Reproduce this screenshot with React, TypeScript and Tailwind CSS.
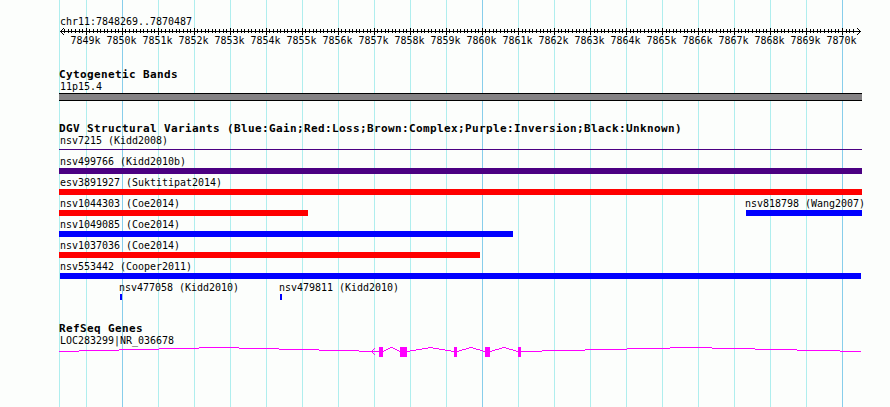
type Feature = {
  name: string;
  start: number;
  end: number;
  labelX: number;
  color: string;
};

const LEFT = 59;

const rows: Feature[][] = [
  [{ name: "nsv499766 (Kidd2010b)", start: 59, end: 862, labelX: 60, color: "bg-[#4b0082]" }],
  [{ name: "esv3891927 (Suktitipat2014)", start: 59, end: 862, labelX: 60, color: "bg-[#ff0000]" }],
  [
    { name: "nsv1044303 (Coe2014)", start: 59, end: 308, labelX: 60, color: "bg-[#ff0000]" },
    { name: "nsv818798 (Wang2007)", start: 746, end: 862, labelX: 745, color: "bg-[#0000ff]" },
  ],
  [{ name: "nsv1049085 (Coe2014)", start: 59, end: 513, labelX: 60, color: "bg-[#0000ff]" }],
  [{ name: "nsv1037036 (Coe2014)", start: 59, end: 480, labelX: 60, color: "bg-[#ff0000]" }],
  [{ name: "nsv553442 (Cooper2011)", start: 60, end: 861, labelX: 60, color: "bg-[#0000ff]" }],
  [
    { name: "nsv477058 (Kidd2010)", start: 120, end: 122, labelX: 119, color: "bg-[#0000ff]" },
    { name: "nsv479811 (Kidd2010)", start: 280, end: 282, labelX: 279, color: "bg-[#0000ff]" },
  ],
];

const exons = [
  [379, 383],
  [400, 407],
  [454, 457],
  [485, 490],
  [518, 521],
];

const introns = [
  [59, 379],
  [383, 400],
  [407, 454],
  [457, 485],
  [490, 518],
  [521, 861],
];

const kilobases = Array.from({ length: 22 }, (_, i) => 7849 + i);
const minorTicks = Array.from({ length: 220 }, (_, i) => Math.floor(86.32 + (i - 6) * 3.6007));

// An intron climbs 4px to its middle and comes back down, one pixel per step.
function intronSteps(start: number, end: number) {
  const edges = [0, 1, 3, 5, 7, 9, 11, 13, 15, 16].map((n) =>
    Math.round(start + ((end - start) * n) / 16)
  );
  const heights = [0, 1, 2, 3, 4, 3, 2, 1, 0];
  return heights.map((h, i) => ({ x: edges[i], y: 351 - h, width: edges[i + 1] - edges[i] }));
}

export default function App() {
  return (
    <div className="relative h-[407px] w-[890px] overflow-hidden bg-[#fcfefc] font-['DejaVu_Sans_Mono',monospace] text-[11px] leading-[14px] text-black">
      <GridLines />
      <div className="relative pl-[59px] pt-[15px]">
        <Label className="ml-px">chr11:7848269..7870487</Label>
        <Ruler />
        <div className="ml-[9px] flex">
          {kilobases.map((kb) => (
            <div key={kb} className="flex h-3 w-9 shrink-0 justify-center">
              <span className="block origin-center scale-x-[.906]">{kb}k</span>
            </div>
          ))}
        </div>

        <Heading className="mt-[22px]">Cytogenetic Bands</Heading>
        <Label className="ml-px">11p15.4</Label>
        <div className="mt-px h-2 w-[803px] border-y border-black bg-[#848284]" />

        <Heading className="mt-[21px]">
          DGV Structural Variants (Blue:Gain;Red:Loss;Brown:Complex;Purple:Inversion;Black:Unknown)
        </Heading>
        <div className="h-[21px]">
          <Label className="ml-px">nsv7215 (Kidd2008)</Label>
          <div className="mt-[3px] h-px w-[803px] bg-[#4b0082]" />
        </div>
        {rows.map((features) => (
          <FeatureRow key={features[0].name} features={features} />
        ))}

        <Heading className="mt-5">RefSeq Genes</Heading>
        <Label className="ml-px">LOC283299|NR_036678</Label>
        <GeneModel />
      </div>
    </div>
  );
}

function Heading({ children, className }: { children: string; className: string }) {
  return (
    <div className={`h-3 whitespace-nowrap font-bold tracking-[0.378px] ${className}`}>
      {children}
    </div>
  );
}

function Label({ children, className = "" }: { children: string; className?: string }) {
  return (
    <div className={`h-3 whitespace-nowrap ${className}`}>
      <span className="block w-max origin-left scale-x-[.906]">{children}</span>
    </div>
  );
}

function FeatureRow({ features }: { features: Feature[] }) {
  return (
    <div className="flex h-[21px]">
      {features.map((f, i) => {
        const previousEnd = i === 0 ? LEFT : features[i - 1].end;
        return (
          <div
            key={f.name}
            className="shrink-0"
            style={{ width: f.end - f.start, marginLeft: f.start - previousEnd }}
          >
            <div style={{ marginLeft: f.labelX - f.start }}>
              <Label>{f.name}</Label>
            </div>
            <div className={`mt-px h-1.5 ${f.color}`} />
          </div>
        );
      })}
    </div>
  );
}

function GridLines() {
  return (
    <svg className="absolute inset-0" width="890" height="407" shapeRendering="crispEdges">
      <rect x="59" y="0" width="1" height="407" fill="#afeeee" />
      {kilobases.map((kb, i) => (
        <rect
          key={kb}
          x={86 + i * 36}
          y="0"
          width="1"
          height="407"
          fill={kb % 10 === 0 ? "#87ceeb" : "#afeeee"}
        />
      ))}
    </svg>
  );
}

function Ruler() {
  return (
    <svg
      className="mt-px block h-1.5 w-[803px] overflow-visible"
      viewBox="59 28 803 6"
      shapeRendering="crispEdges"
    >
      <rect x="60" y="31" width="801" height="1" />
      {minorTicks.map((x) => (
        <rect key={x} x={x} y="29" width="1" height="4" />
      ))}
      {kilobases.map((kb, i) => (
        <rect key={kb} x={86 + i * 36} y="28" width="1" height="7" />
      ))}
      <path d="M60 31h1v1h-1zM61 30h1v1h-1zM62 29h1v1h-1zM63 28h1v1h-1zM61 32h1v1h-1zM62 33h1v1h-1zM63 34h1v1h-1z" />
      <path d="M860 31h1v1h-1zM859 30h1v1h-1zM858 29h1v1h-1zM857 28h1v1h-1zM859 32h1v1h-1zM858 33h1v1h-1zM857 34h1v1h-1z" />
    </svg>
  );
}

function GeneModel() {
  return (
    <svg
      className="mt-px block h-2.5 w-[803px] overflow-visible"
      viewBox="59 347 803 10"
      fill="#ff00ff"
      shapeRendering="crispEdges"
    >
      {introns.map(([start, end]) =>
        intronSteps(start, end).map((step) => (
          <rect key={step.x} x={step.x} y={step.y} width={step.width} height="1" />
        ))
      )}
      {exons.map(([start, end]) => (
        <rect key={start} x={start} y="347" width={end - start} height="10" />
      ))}
      <path d="M371 351h8v1h-8zM372 350h1v1h-1zM373 349h1v1h-1zM374 348h1v1h-1zM372 352h1v1h-1zM373 353h1v1h-1zM374 354h1v1h-1z" />
    </svg>
  );
}
